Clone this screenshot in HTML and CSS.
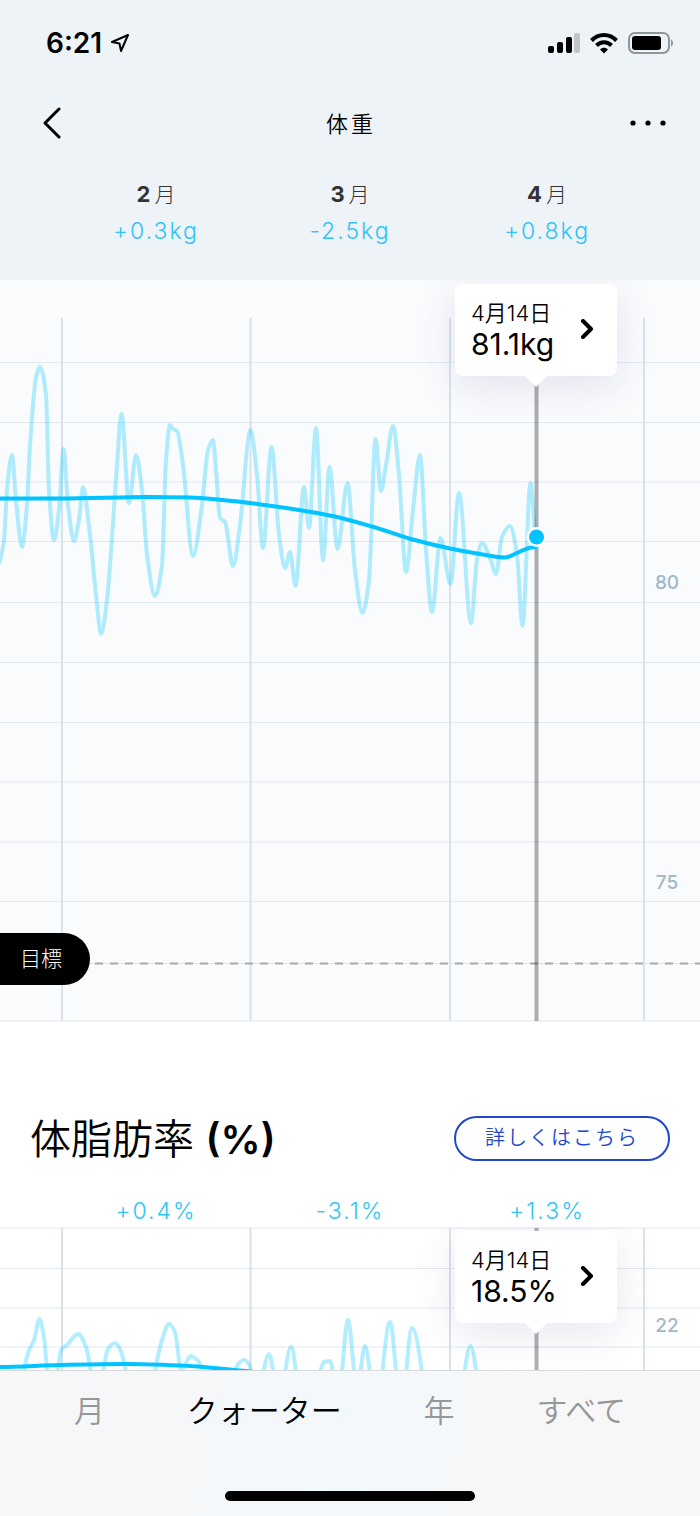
FILE: index.html
```html
<!DOCTYPE html>
<html lang="ja">
<head>
  <meta charset="UTF-8">
  <meta name="viewport" content="width=device-width, initial-scale=1.0">
  <title>体重</title>
  <link rel="stylesheet" href="styles.css">
</head>
<body>
  <header class="header">
    <div class="status-bar">
      <div class="status-time">
        <span>6:21</span>
        <svg width="20" height="20" viewBox="0 0 20 20" fill="none" stroke="#000" stroke-width="2" stroke-linejoin="round">
          <path d="M18 2L2 9L9.500 10.500L11 18Z"/>
        </svg>
      </div>
      <div class="status-icons">
        <svg width="32" height="21" viewBox="0 0 32 21">
          <rect x="0" y="13" width="6" height="7" rx="2"/>
          <rect x="9" y="9" width="6" height="11" rx="2"/>
          <rect x="18" y="4" width="6" height="16" rx="2"/>
          <rect x="26" y="0" width="6" height="20" rx="2" fill="#bfc4c8"/>
        </svg>
        <svg width="28" height="21" viewBox="0 0 28 21" fill="none" stroke="#000">
          <path d="M1.500 7.500C8.500 0.200 19.500 0.200 26.500 7.500" stroke-width="4"/>
          <path d="M6.500 12.500C10.700 8.200 17.300 8.200 21.500 12.500" stroke-width="4"/>
          <path d="M10 16.600C12.300 14.200 15.700 14.200 18 16.600L14 20.600Z" fill="#000" stroke="none"/>
        </svg>
        <svg width="46" height="22" viewBox="0 0 46 22">
          <rect x="1" y="1" width="40" height="20" rx="6" fill="none" stroke="#8f9497" stroke-width="2"/>
          <rect x="4" y="4" width="29" height="14" rx="3"/>
          <path d="M43 7.500C45.700 8.500 45.700 13.500 43 14.500Z" fill="#8f9497"/>
        </svg>
      </div>
    </div>

    <nav class="nav">
      <button class="nav-btn" aria-label="戻る">
        <svg width="20" height="32" viewBox="0 0 20 32" fill="none" stroke="#000" stroke-width="3" stroke-linecap="round" stroke-linejoin="round">
          <path d="M17 2L3 16L17 30"/>
        </svg>
      </button>
      <h1 class="nav-title">体重</h1>
      <button class="nav-btn" aria-label="メニュー">
        <svg width="36" height="6" viewBox="0 0 36 6">
          <circle cx="3" cy="3" r="2.600"/>
          <circle cx="18" cy="3" r="2.600"/>
          <circle cx="33" cy="3" r="2.600"/>
        </svg>
      </button>
    </nav>

    <div class="months">
      <div class="month">
        <p class="month-name"><b>2</b>月</p>
        <p class="diff">+0.3kg</p>
      </div>
      <div class="month">
        <p class="month-name"><b>3</b>月</p>
        <p class="diff">-2.5kg</p>
      </div>
      <div class="month">
        <p class="month-name"><b>4</b>月</p>
        <p class="diff">+0.8kg</p>
      </div>
    </div>
  </header>

  <main>
    <section class="chart chart-weight">
      <svg class="chart-svg" viewBox="0 280 700 742">
        <g class="grid-h">
          <path d="M0 362.500H700M0 422.500H700M0 482H700M0 541.500H700M0 602.500H700M0 662.500H700M0 722.500H700M0 782H700M0 842H700M0 901.500H700M0 1021H700"/>
        </g>
        <g class="grid-v">
          <path d="M62 318V1021M250.500 318V1021M450 318V1021M644 318V1021"/>
        </g>
        <path class="goal-base" d="M90 963.500H700"/>
        <path class="goal-line" d="M95 963.500H700"/>
        <path class="line-daily" id="weight-daily"/>
        <path class="cursor-line" d="M536.500 384V1021"/>
        <path class="line-trend" id="weight-trend"/>
        <circle cx="536.500" cy="537" r="10" fill="#fff"/>
        <circle cx="536.500" cy="537" r="7.500" fill="#00c3ff"/>
        <text class="axis-label" x="667" y="589">80</text>
        <text class="axis-label" x="667" y="889">75</text>
      </svg>
      <a class="tooltip" href="#">
        <span class="tooltip-text">
          <span class="tooltip-date">4月14日</span>
          <span class="tooltip-value">81.1kg</span>
        </span>
        <svg width="14" height="20" viewBox="0 0 14 20" fill="none" stroke="#000" stroke-width="4" stroke-linecap="round" stroke-linejoin="round">
          <path d="M3 2L11 10L3 18"/>
        </svg>
      </a>
      <span class="goal">目標</span>
    </section>

    <section class="fat">
      <div class="fat-head">
        <h2 class="fat-title">体脂肪率 <b>(%)</b></h2>
        <a class="more" href="#">詳しくはこちら</a>
      </div>
      <div class="months">
        <p class="diff">+0.4%</p>
        <p class="diff">-3.1%</p>
        <p class="diff">+1.3%</p>
      </div>
      <div class="chart chart-fat">
        <svg class="chart-svg" viewBox="0 1227 700 143">
          <g class="grid-h">
            <path d="M0 1228H700M0 1268.500H700M0 1308H700M0 1347H700"/>
          </g>
          <g class="grid-v">
            <path d="M62 1228V1370M250.500 1228V1370M450 1228V1370M644 1228V1370"/>
          </g>
          <path class="line-daily" id="fat-daily"/>
          <path class="cursor-line" d="M536.500 1228V1370"/>
          <path class="line-trend" id="fat-trend"/>
          <text class="axis-label" x="667" y="1332">22</text>
        </svg>
        <a class="tooltip" href="#">
          <span class="tooltip-text">
            <span class="tooltip-date">4月14日</span>
            <span class="tooltip-value">18.5%</span>
          </span>
          <svg width="14" height="20" viewBox="0 0 14 20" fill="none" stroke="#000" stroke-width="4" stroke-linecap="round" stroke-linejoin="round">
            <path d="M3 2L11 10L3 18"/>
          </svg>
        </a>
      </div>
    </section>
  </main>

  <footer class="tab-bar">
    <div class="tabs">
      <button class="tab">月</button>
      <button class="tab active">クォーター</button>
      <button class="tab">年</button>
      <button class="tab">すべて</button>
    </div>
    <div class="home-indicator"></div>
  </footer>

  <script src="script.js"></script>
</body>
</html>
```

FILE: styles.css
```css
* {
  margin: 0;
  padding: 0;
  box-sizing: border-box;
}

body {
  min-height: 100vh;
  display: flex;
  flex-direction: column;
  background: #fff;
  color: #000;
  font-family: Inter, "Noto Sans CJK JP", sans-serif;
  font-weight: 350;
}

main {
  flex: 1;
}

svg {
  display: block;
}

button {
  border: none;
  background: none;
  font: inherit;
  cursor: pointer;
}

a {
  color: inherit;
  text-decoration: none;
}

/* Header */
.header {
  position: relative;
  z-index: 1;
  height: 280px;
  background: #edf3f7;
}

.status-bar {
  display: flex;
  justify-content: space-between;
  align-items: center;
  height: 86px;
  padding: 0 26px 0 46px;
}

.status-time {
  display: flex;
  align-items: center;
  gap: 8px;
  font-size: 28px;
  font-weight: 600;
}

.status-icons {
  display: flex;
  align-items: center;
  gap: 10px;
}

.nav {
  display: grid;
  grid-template-columns: 1fr auto 1fr;
  align-items: center;
  height: 74px;
  padding: 0 34px 0 36px;
}

.nav-btn {
  justify-self: start;
  padding: 6px 0 6px 6px;
}

.nav-btn:last-child {
  justify-self: end;
}

.nav-title {
  padding-bottom: 2px;
  font-size: 22px;
  font-weight: 350;
  letter-spacing: 3px;
}

/* Columns share the vertical lines of the charts */
.months {
  display: grid;
  grid-template-columns: 188fr 200fr 194fr;
  padding: 0 56px 0 62px;
  text-align: center;
}

.header .months {
  padding-top: 16px;
}

.month-name {
  color: #333;
  font-size: 21px;
  font-weight: 300;
  line-height: 36px;
}

.month-name b {
  margin-right: 4px;
  font-size: 22px;
  font-weight: 700;
}

.diff {
  color: #30c4f7;
  font-size: 23px;
  line-height: 36px;
  letter-spacing: 2px;
}

/* Charts */
.chart {
  position: relative;
}

.chart-weight {
  background: #fafbfd;
}

.chart-svg {
  width: 100%;
  height: auto;
}

.chart-svg path {
  fill: none;
}

.grid-h {
  stroke: #e1e8ef;
  stroke-width: 1;
}

.grid-v {
  stroke: #d7e2ec;
  stroke-width: 2;
}

.goal-base {
  stroke: #dde2e8;
  stroke-width: 1;
}

.goal-line {
  stroke: #a9aaad;
  stroke-width: 2;
  stroke-dasharray: 8 7;
}

.line-daily {
  stroke: #00c8ff;
  stroke-width: 4;
  stroke-opacity: 0.3;
  stroke-linecap: round;
  stroke-linejoin: round;
}

.line-trend {
  stroke: #00c3ff;
  stroke-width: 4;
}

.cursor-line {
  stroke: #000;
  stroke-width: 4;
  stroke-opacity: 0.31;
}

.axis-label {
  fill: #9fb8ca;
  font-size: 19px;
  font-weight: 500;
  text-anchor: middle;
}

.tooltip {
  position: absolute;
  top: 4px;
  left: 65%;
  display: flex;
  align-items: center;
  justify-content: space-between;
  min-width: 162px;
  height: 92px;
  padding: 0 23px 2px 16px;
  background: #fff;
  border-radius: 8px;
  box-shadow: 0 10px 40px rgba(60, 60, 120, 0.12);
}

.tooltip::after {
  content: '';
  position: absolute;
  top: 100%;
  left: 50%;
  margin-left: -11px;
  border: 11px solid transparent;
  border-top-color: #fff;
  border-bottom: none;
}

.tooltip-text {
  display: flex;
  flex-direction: column;
}

.tooltip-date {
  font-size: 22px;
  line-height: 30px;
}

.tooltip-value {
  font-size: 30px;
  font-weight: 400;
  line-height: 32px;
}

.goal {
  position: absolute;
  top: 88%;
  left: 0;
  padding: 0 28px 0 20px;
  background: #000;
  border-radius: 0 26px 26px 0;
  color: #fff;
  font-size: 21px;
  font-weight: 300;
  line-height: 52px;
}

/* Body fat */
.fat {
  padding-top: 94px;
}

.fat-head {
  display: flex;
  justify-content: space-between;
  align-items: center;
  height: 45px;
  margin-bottom: 30px;
  padding: 0 30px;
}

.fat-title {
  padding-bottom: 6px;
  font-size: 41px;
  font-weight: 350;
}

.fat-title b {
  font-size: 40px;
  font-weight: 600;
}

.more {
  padding: 0 29px;
  border: 2px solid #2148cb;
  border-radius: 23px;
  color: #2148cb;
  font-size: 20px;
  line-height: 41px;
  letter-spacing: 2px;
}

.fat .diff {
  padding-top: 4px;
  line-height: 32px;
}

.chart-fat {
  overflow: hidden;
}

/* Bottom tabs */
.tab-bar {
  position: sticky;
  bottom: 0;
  height: 146px;
  background: linear-gradient(100deg, #f7f7f8 10%, #f3f8fb 50%, #f7f7f7 80%);
  border-top: 1px solid #d8dadb;
}

.tabs {
  display: flex;
  justify-content: space-between;
  padding: 16px 74px 0;
}

.tab {
  color: #969798;
  font-size: 31px;
  line-height: 48px;
}

.tab.active {
  color: #000;
}

.home-indicator {
  width: 250px;
  height: 10px;
  margin: 56px auto 0;
  background: #000;
  border-radius: 5px;
}
```

FILE: script.js
```js
const weightDaily = [
  [-2, 564], [4, 540], [7, 490], [12, 455], [16, 500], [22, 547], [27, 505], [30, 445], [36, 378],
  [40, 367], [46, 395], [49, 490], [54, 540], [59, 510], [63.5, 449], [68, 505], [74, 541],
  [79, 520], [83, 487], [90, 535], [97, 605], [101, 634], [107, 600], [116, 480], [121.5, 414],
  [129, 503], [136, 455], [142, 490], [147, 555], [155, 596], [162, 565], [166, 460], [170, 425],
  [173, 429], [177, 431], [183, 465], [193, 556], [202, 505], [208, 450], [213, 440], [216, 470],
  [220, 518], [225, 522], [233, 566], [240, 525], [250.5, 430], [257, 475], [263, 548],
  [271.5, 447], [279, 535], [285, 568], [290, 552], [295.5, 586], [304, 487], [309, 528],
  [316, 428], [323, 560], [329.5, 467], [337.5, 549], [347.5, 483], [355, 570], [362.5, 613],
  [369, 580], [375.5, 439], [381, 491], [386, 465], [393, 426], [399, 475],
  [406, 572], [413, 510], [420, 455], [426, 550], [432, 612], [440.5, 538], [450.5, 584],
  [459, 493], [471, 623], [477, 560], [482, 543], [491, 561], [496, 574], [502, 537],
  [510, 526], [517, 555], [522.5, 626], [530.5, 483], [536, 537]
];

const weightTrend = [
  [0, 498.5], [60, 498.5], [150, 497], [190, 497.5], [230, 500.7], [272, 506], [330, 515.5],
  [372, 526.5], [411, 539], [450, 548.5], [480, 554], [505, 557.5], [520, 551.5], [531, 547.5],
  [537, 547]
];

const fatDaily = [
  [16, 1400], [28, 1353], [34, 1340], [39.5, 1319], [44, 1338], [52, 1420], [61, 1350],
  [67, 1345], [78, 1334], [86, 1347], [97, 1400], [108, 1349], [115, 1343], [120, 1349],
  [140, 1430], [162, 1340], [169, 1324], [175, 1332], [181, 1370], [191, 1356], [199, 1362],
  [218, 1410], [239, 1363], [244, 1360], [249, 1364], [256, 1400], [269, 1354], [279, 1400],
  [291, 1347], [306, 1450], [324, 1362], [330, 1361], [338, 1400], [348, 1320], [357, 1390],
  [365, 1346], [376, 1410], [390, 1322], [401, 1410], [412, 1328], [440, 1480], [460, 1400],
  [470.5, 1346], [480, 1400], [490, 1480]
];

const fatTrend = [
  [0, 1367], [60, 1365], [125, 1364], [180, 1365.5], [240, 1370.5], [300, 1376]
];

// Monotone cubic curve: flat at every peak, no overshoot between days
function smoothPath(points) {
  const slope = (a, b) => (b[1] - a[1]) / (b[0] - a[0]);
  const tangents = points.map((p, i) => {
    if (i === 0 || i === points.length - 1) return 0;
    const before = slope(points[i - 1], p);
    const after = slope(p, points[i + 1]);
    if (before * after <= 0) return 0;
    return 2 * before * after / (before + after);
  });

  let d = 'M' + points[0].join(' ');
  for (let i = 1; i < points.length; i++) {
    const a = points[i - 1];
    const b = points[i];
    const third = (b[0] - a[0]) / 3;
    d += `C${a[0] + third} ${a[1] + third * tangents[i - 1]} ${b[0] - third} ${b[1] - third * tangents[i]} ${b[0]} ${b[1]}`;
  }
  return d;
}

function drawLine(id, points) {
  document.getElementById(id).setAttribute('d', smoothPath(points));
}

drawLine('weight-daily', weightDaily);
drawLine('weight-trend', weightTrend);
drawLine('fat-daily', fatDaily);
drawLine('fat-trend', fatTrend);
```
